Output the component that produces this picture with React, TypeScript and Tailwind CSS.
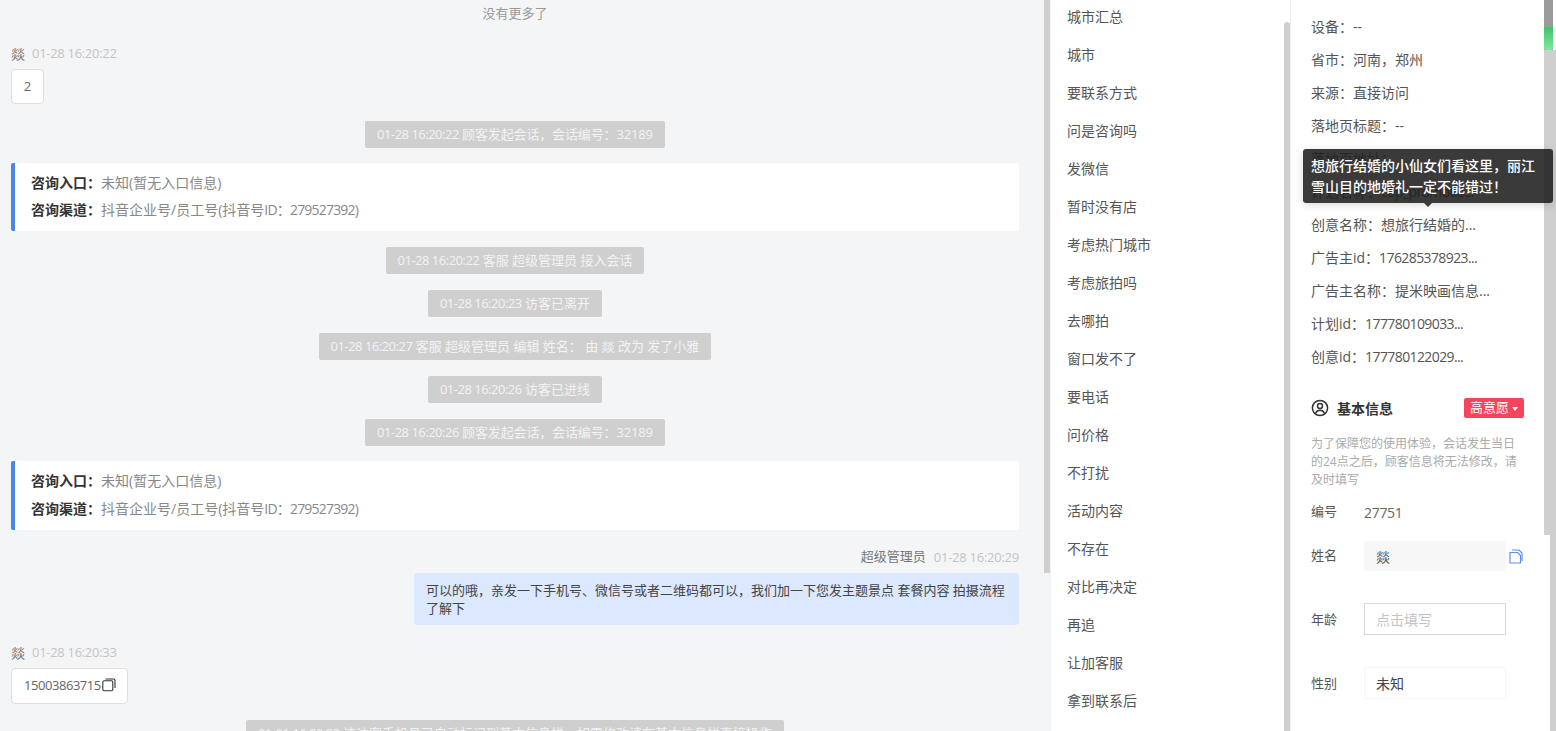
const font = "[font-family:'Open_Sans','Noto_Sans_CJK_SC',sans-serif]";

function Pill({ time, text, extra = "", wide = false }: { time: string; text: string; extra?: string; wide?: boolean }) {
  return (
    <div className={`mx-auto flex h-[27px] items-center rounded-[2px] bg-[#cfcfcf] text-[13px] whitespace-pre text-[#f3f3f3] ${wide ? "w-[538px] justify-center" : "w-fit px-3"} ${extra}`}>
      <span className="tracking-[-0.5px]">{time}</span>
      <span>{" " + text}</span>
    </div>
  );
}

function EntryCard({ h, extra = "", gap }: { h: string; extra?: string; gap: string }) {
  return (
    <div className={`flex flex-col justify-center rounded-[2px] border-l-4 border-[#4a86e8] bg-white pl-[16px] text-[14px] leading-[19px] text-[#888] ${gap} ${h} ${extra}`}>
      <div className="whitespace-nowrap">
        <span className="font-bold text-[#333]">咨询入口：</span>未知(暂无入口信息)
      </div>
      <div className="whitespace-nowrap">
        <span className="font-bold text-[#333]">咨询渠道：</span>抖音企业号/员工号(抖音号<span className="tracking-[-0.8px]">ID：279527392)</span>
      </div>
    </div>
  );
}

function Sender({ name, time, extra = "" }: { name: string; time: string; extra?: string }) {
  return (
    <div className={`flex h-[20px] items-center gap-[7px] ${extra}`}>
      <span className="text-[14px] text-[#777]">{name}</span>
      <span className="pt-px text-[13px] tracking-[-0.3px] text-[#c4c4c4]">{time}</span>
    </div>
  );
}

function Thumb({ extra }: { extra: string }) {
  return <div className={`w-[6px] shrink-0 bg-[#cfcfcf] ${extra}`} />;
}

const listItems = [
  "城市汇总", "城市", "要联系方式", "问是咨询吗", "发微信", "暂时没有店", "考虑热门城市", "考虑旅拍吗", "去哪拍", "窗口发不了",
  "要电话", "问价格", "不打扰", "活动内容", "不存在", "对比再决定", "再追", "让加客服", "拿到联系后",
];

const infoRows: [string, string, boolean][] = [
  ["设备：", "--", false],
  ["省市：", "河南，郑州", false],
  ["来源：", "直接访问", false],
  ["落地页标题：", "--", false],
  ["落地页地址：", "", false],
  ["计划名称：", "cop_promotio...", true],
  ["创意名称：", "想旅行结婚的...", false],
  ["广告主id：", "176285378923...", true],
  ["广告主名称：", "提米映画信息...", false],
  ["计划id：", "177780109033...", true],
  ["创意id：", "177780122029...", true],
];

function FieldRow({ label, children, extra = "", labelExtra = "" }: { label: string; children: React.ReactNode; extra?: string; labelExtra?: string }) {
  return (
    <div className={`flex items-center text-[14px] ${extra}`}>
      <span className={`w-[53px] shrink-0 text-[13px] text-[#555] ${labelExtra}`}>{label}</span>
      {children}
    </div>
  );
}

export default function App() {
  return (
    <div className={`relative flex h-[731px] w-[1556px] overflow-hidden bg-white ${font}`}>
      {/* Chat */}
      <main className="flex w-[1051px] shrink-0 bg-[#f4f5f7]">
        <div className="w-[1044px] shrink-0 pr-[25px] pl-[11px]">
          <div className="flex h-[28px] items-center justify-center text-[13px] text-[#999]">没有更多了</div>
          <Sender name="燚" time="01-28 16:20:22" extra="mt-[15px]" />
          <div className="mt-[6px] flex h-[35px] w-[33px] items-center justify-center rounded-[4px] border border-[#dedede] bg-white text-[13px] text-[#666]">2</div>
          <Pill time="01-28 16:20:22" text="顾客发起会话，会话编号：32189" extra="mt-[17px] tracking-[-0.14px]" />
          <EntryCard h="h-[68px] pb-[2px]" gap="gap-[8px]" extra="mt-[15px]" />
          <Pill time="01-28 16:20:22" text="客服 超级管理员 接入会话" extra="mt-[16px]" />
          <Pill time="01-28 16:20:23" text="访客已离开" extra="mt-[16px]" />
          <Pill time="01-28 16:20:27" text="客服 超级管理员 编辑 姓名： 由 燚 改为 发了小雅" extra="mt-[16px]" />
          <Pill time="01-28 16:20:26" text="访客已进线" extra="mt-[16px]" />
          <Pill time="01-28 16:20:26" text="顾客发起会话，会话编号：32189" extra="mt-[16px] tracking-[-0.14px]" />
          <EntryCard h="h-[69px] pb-[3px]" gap="gap-[9px]" extra="mt-[15px]" />
          <div className="mt-[17px] flex h-[20px] items-center justify-end gap-[8px]">
            <span className="text-[13px] text-[#777]">超级管理员</span>
            <span className="pt-px text-[13px] tracking-[-0.25px] text-[#c4c4c4]">01-28 16:20:29</span>
          </div>
          <div className="mt-[6px] ml-auto h-[52px] w-[605px] rounded-[4px] bg-[#dbe8fd] px-[12px] py-[8px] text-[13px] leading-[18px] text-[#444]">
            可以的哦，亲发一下手机号、微信号或者二维码都可以，我们加一下您发主题景点 套餐内容 拍摄流程了解下
          </div>
          <Sender name="燚" time="01-28 16:20:33" extra="mt-[17px]" />
          <div className="mt-[6px] flex h-[36px] w-[117px] items-center rounded-[4px] border border-[#dedede] bg-white pl-[12px] text-[13px] text-[#666]">
            <span className="tracking-[-0.45px]">15003863715</span>
            <svg width="14" height="14" viewBox="0 0 14 14" fill="none" stroke="#333" strokeWidth="1.1" className="mt-[-3px] ml-[1px] shrink-0">
              <rect x="0.8" y="2.8" width="10" height="10" rx="1.5" />
              <path d="M3.5 1h8a1.5 1.5 0 0 1 1.5 1.5V10" />
            </svg>
          </div>
          <Pill time="01-01 16:20:33" text="该访客手机号已自动标记到基本信息栏，如需修改请在基本信息栏直接操作" wide extra="mt-[16px]" />
        </div>
        <Thumb extra="h-[573px]" />
      </main>

      {/* Quick phrases */}
      <section className="flex w-[240px] shrink-0 border-r border-[#eeeeee]">
        <ul className="w-[233px] shrink-0 pl-[16px] text-[14px] text-[#555]">
          {listItems.map((item) => (
            <li key={item} className="flex h-[38px] items-center whitespace-nowrap first:-mt-[3px]">{item}</li>
          ))}
        </ul>
        <Thumb extra="mt-[22px] h-[709px] rounded-t-[3px]" />
      </section>

      {/* Visitor info */}
      <aside className="w-[253px] shrink-0 px-[20px] text-[#555]">
        <div className="pt-[10px]">
          {infoRows.map(([k, v, numeric]) => (
            <div key={k} className="flex h-[33px] items-center text-[14px] whitespace-pre">
              <span>{k}</span>
              <span className={numeric ? "tracking-[-0.6px]" : ""}>{v}</span>
            </div>
          ))}
        </div>
        <div className="mt-[25px] flex h-[20px] items-center justify-between">
          <div className="flex items-center gap-[8px]">
            <svg width="18" height="18" viewBox="0 0 18 18" fill="none" stroke="#333" strokeWidth="1.5">
              <circle cx="9" cy="9" r="7.6" />
              <circle cx="9" cy="7" r="2.5" />
              <path d="M4.6 14.2c.8-2 2.4-3 4.4-3s3.6 1 4.4 3" />
            </svg>
            <span className="text-[14px] font-bold text-[#333]">基本信息</span>
          </div>
          <div className="flex h-[20px] w-[60px] items-center justify-center gap-[3px] rounded-[2px] bg-[#f5455c] text-[13px] text-white">
            高意愿
            <span className="mt-[1px] h-0 w-0 border-x-[3.5px] border-t-[4px] border-x-transparent border-t-white" />
          </div>
        </div>
        <p className="mt-[17px] text-[12px] leading-[18px] text-[#aaa]">
          为了保障您的使用体验，会话发生当日的24点之后，顾客信息将无法修改，请及时填写
        </p>
        <FieldRow label="编号" extra="mt-[13px] h-[20px]">
          <span className="tracking-[-0.3px] text-[#666]">27751</span>
        </FieldRow>
        <FieldRow label="姓名" extra="mt-[19px]">
          <div className="flex h-[30px] w-[142px] items-center bg-[#f7f7f7] pl-[12px] text-[#555]">燚</div>
          <svg width="14" height="15" viewBox="0 0 14 15" fill="none" stroke="#5b8def" strokeWidth="1.2" className="ml-[3px]">
            <path d="M1 3.5h7.5l3 3V14H1z" />
            <path d="M3 1h7l3 3v8" />
          </svg>
        </FieldRow>
        <FieldRow label="年龄" extra="mt-[32px]" labelExtra="pt-[2px]">
          <div className="flex h-[32px] w-[142px] items-center border border-[#d9d9d9] pl-[11px] text-[#c4c4c4]">点击填写</div>
        </FieldRow>
        <FieldRow label="性别" extra="mt-[32px]" labelExtra="pt-[2px]">
          <div className="flex h-[32px] w-[142px] items-center rounded-[2px] border border-[#f6f6f6] pl-[11px] text-[#444]">未知</div>
        </FieldRow>
      </aside>

      <Thumb extra="h-[535px]" />
      <div className="w-[6px] shrink-0 bg-[#cfcfcf]" />

      {/* Scroll marker at the top right */}
      <div className="absolute top-0 right-0 h-[50px] w-[12px] bg-white">
        <div className="h-[50px] w-[9px] bg-[#9b9b9b]">
          <div className="h-[27px]" />
          <div className="h-[23px] rounded-b-[2px] bg-gradient-to-b from-[#3cc464] to-[#7fe79f]" />
        </div>
      </div>

      {/* Tooltip */}
      <div className="absolute top-[149px] left-[1303px] h-[54px] w-[250px] rounded-[3px] bg-[#1f1f1f]/88 px-[8px] py-[6px] text-[14px] leading-[21px] font-medium text-white shadow-[0_2px_8px_rgba(0,0,0,0.15)]">
        想旅行结婚的小仙女们看这里，丽江雪山目的地婚礼一定不能错过！
        <span className="absolute top-full left-[121px] h-0 w-0 border-x-[4px] border-t-[4px] border-x-transparent border-t-[#3a3a3a]" />
      </div>
    </div>
  );
}
